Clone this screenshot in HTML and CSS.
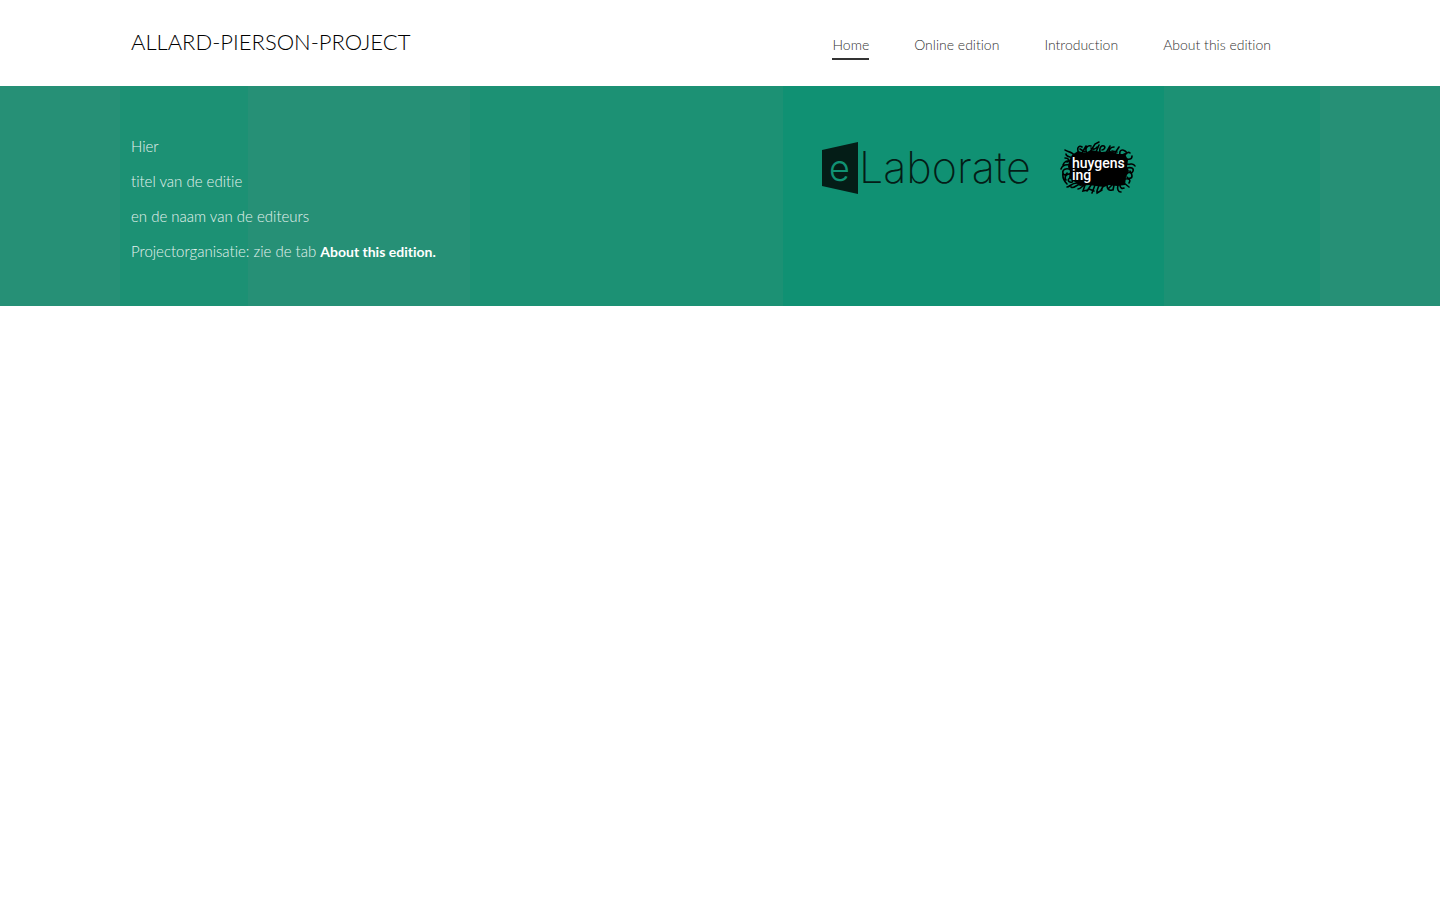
FILE: index.html
```html
<!DOCTYPE html>
<html lang="nl">
<head>
<meta charset="utf-8">
<meta name="viewport" content="width=device-width, initial-scale=1">
<title>Allard-Pierson-project</title>
<link rel="stylesheet" href="styles.css">
</head>
<body>
<header class="wrap header">
  <h1 class="title">ALLARD-PIERSON-PROJECT</h1>
  <nav class="nav">
    <a class="nav-link active" href="#">Home</a>
    <a class="nav-link" href="#">Online edition</a>
    <a class="nav-link" href="#">Introduction</a>
    <a class="nav-link" href="#">About this edition</a>
  </nav>
</header>
<main class="banner">
  <div class="wrap banner-inner">
    <div class="intro">
      <p>Hier</p>
      <p>titel van de editie</p>
      <p>en de naam van de editeurs</p>
      <p>Projectorganisatie: zie de tab <strong>About this edition.</strong></p>
    </div>
    <div class="logos">
      <svg class="logo-elaborate" viewBox="0 0 210 54" role="img" aria-label="eLaborate">
        <path d="M0 9 36 1v52L0 45z" fill="#041d17"/>
        <text class="mark-e" x="7" y="40">e</text>
        <text class="mark-word" x="37" y="42">Laborate</text>
      </svg>
      <svg class="logo-huygens" viewBox="0 0 76 54" role="img" aria-label="huygens ing">
        <path d="M12 14 18 10 25 12 31 9 42 11 51 10 58 13 65 13 68 19 67 26 69 30 66 36 65 44 57 45 49 44 44 46 36 45 29 44 20 45 15 41 9 37 10 30 8 26 9 20z"/>
        <g fill="none" stroke="#000" stroke-width="1.6" stroke-linecap="round">
          <path d="M15 15C12 10 7 11 5 9M13 17C9 15 6 16 6 13M19 12C16 7 19 4 22 6M22 12 26 5M20 8l5 3M27 12c-3-5 1-8 4-7M30 11l5-8 4-2M31 7c2 2 5 1 6-1M36 11l3-7M40 11c-1-5 2-7 4-6s0 4-2 4M46 12l4-7M49 12c0-4 2-6 5-6M52 10l5 1M55 12l4-6M60 14c-1-5 2-6 5-4s1 3-1 3M65 14c2-3 4-3 5-2"/>
          <path d="M11 20c-4-1-7 1-8 4M10 24c-5-1-8 1-9 4M11 29c-5-3-9 0-8 3s3 2 4 0M12 33c-6-1-8 3-6 6M13 37c-5-1-6 3-3 4s3-1 2-2M3 32c-1 6 2 9 4 11M5 17c4 0 5 3 2 4"/>
          <path d="M67 18c4 1 5-1 5-3M67 23c4 1 6-2 8 2M67 27c4-1 7 0 6 3s-3 1-3 0M66 33c4-3 6-1 6 2s-4 3-5 1M65 38c4-1 6 1 4 4M64 42l5 4"/>
          <path d="M17 42c-6 0-7 4-10 4M20 43c-4 1-6 5-9 3M25 43c-3 2-4 5-7 5M25 44l-2 6 5-1M31 44l-4 6M29 48l5 2M35 44l-3 8M39 44c-1 4-3 6-2 8l5-3M44 44l-3 5M47 44c0 4 2 6 5 5M48 48l4-4M54 44l-1 5M58 44c-1 4 0 7 3 7M60 44c0 3 2 4 4 3"/>
        </g>
        <text class="mark-huygens"><tspan x="12" y="27">huygens</tspan><tspan x="12" y="39">ing</tspan></text>
      </svg>
    </div>
  </div>
</main>
</body>
</html>
```
FILE: styles.css
```css
* {
  box-sizing: border-box;
}

body {
  margin: 0;
  background: #fff;
  color: #000;
  font-family: Lato, "Open Sans", sans-serif;
  font-size: 15px;
  font-weight: 300;
  font-variant-ligatures: none;
  line-height: 20px;
}

.wrap {
  max-width: 1200px;
  margin: 0 auto;
  padding: 0 49px 0 11px;
}

.header {
  display: flex;
  flex-wrap: wrap;
  justify-content: space-between;
  align-items: flex-start;
  min-height: 86px;
}

.title {
  margin: 27px 0 0;
  font-size: 22px;
  font-weight: 300;
  line-height: 30px;
}

.nav {
  display: flex;
  flex-wrap: wrap;
  gap: 0 45px;
  margin-top: 35px;
  font-size: 14px;
}

.nav-link {
  padding-bottom: 3px;
  border-bottom: 2px solid transparent;
  color: #333;
  text-decoration: none;
}

.nav-link.active {
  border-color: #333;
}

.banner {
  background: linear-gradient(
    to right,
    #269076 calc(50% - 600px),
    #1c9174 calc(50% - 600px) calc(50% - 472px),
    #269076 calc(50% - 472px) calc(50% - 250px),
    #1c9174 calc(50% - 250px) calc(50% + 63px),
    #109173 calc(50% + 63px) calc(50% + 444px),
    #1c9174 calc(50% + 444px) calc(50% + 600px),
    #269076 calc(50% + 600px)
  );
  color: #fff;
}

.banner-inner {
  display: flex;
  flex-wrap: wrap;
  justify-content: space-between;
  padding-top: 50px;
  padding-bottom: 45px;
}

.intro p {
  margin: 0 0 15px;
  color: #e4f2ee;
}

.intro p:last-child {
  margin: 0;
}

.intro strong {
  color: #fff;
  font-size: 14px;
  font-weight: 700;
  line-height: 1;
}

.logos {
  display: flex;
  align-items: flex-start;
  gap: 28px;
  margin: 5px 135px 0 0;
}

.logo-elaborate {
  width: 210px;
  height: 54px;
}

.logo-huygens {
  width: 76px;
  height: 54px;
}

.mark-e {
  fill: #109173;
  font: 300 36px Inter, sans-serif;
}

.mark-word {
  fill: #041d17;
  font: 200 43px Inter, sans-serif;
}

.mark-huygens {
  fill: #fff;
  font: 500 14px Roboto, sans-serif;
}
```
